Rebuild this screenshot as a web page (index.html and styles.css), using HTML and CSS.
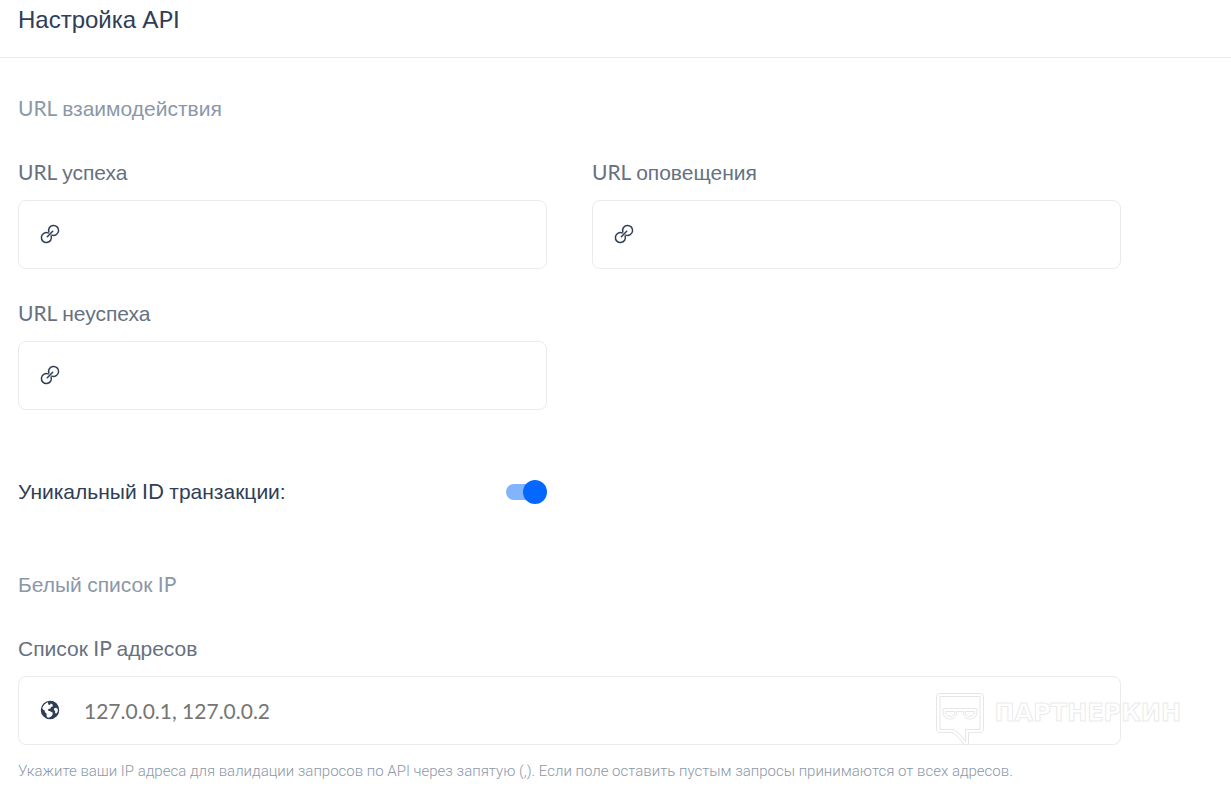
FILE: index.html
```html
<!DOCTYPE html>
<html lang="ru">
<head>
<meta charset="utf-8">
<meta name="viewport" content="width=device-width, initial-scale=1">
<title>Настройка API</title>
<link rel="stylesheet" href="styles.css">
</head>
<body>
<svg class="sprite" aria-hidden="true">
  <symbol id="link" viewBox="0 0 20 20">
    <g fill="none" stroke="currentColor" stroke-width="1.5" stroke-linecap="round">
      <path d="M8.900 8.100A5 5 0 1 1 11.900 11.100"/>
      <path d="M11.100 11.900A5 5 0 1 1 8.100 8.900"/>
      <path d="M7.300 12.700 12.700 7.300"/>
    </g>
  </symbol>
  <symbol id="globe" viewBox="0 0 20 20">
    <circle cx="10" cy="10" r="8.600" fill="#fff" stroke="currentColor" stroke-width="1.3"/>
    <path fill="currentColor" d="M9 1.1 13 1.2C17 2.8 19 6.4 18.8 10.2C18.5 14.8 14.5 18.9 9.8 18.8L9 17.4 11.2 16.4 12.6 14.6 12.8 12.8 10.7 11.4 8 10.4 8.3 9.1 10.6 8.4 10.9 7 13 6.2 12.5 4.4 10.7 3.4 9.9 4.9 8.3 4.4 7.9 2.8Z"/>
    <path fill="currentColor" d="M1.4 8.1 3.1 9.5 4.7 10.4 5 12.3 6.5 13.5 6.8 16.9 7.3 18.3C3.2 17.2.8 12.7 1.4 8.1Z"/>
    <path fill="#fff" d="M14.2 8.2 16 7.7 17.8 9.1 17.7 11.8 16 13.7 14.9 12.2 15.3 10.9 13.8 9.9Z"/>
  </symbol>
</svg>
<header class="page-header"><h1 class="page-title">Настройка<span class="latin"> API</span></h1></header>
<main class="content">
  <section class="section">
    <h2 class="section-title"><span class="latin">URL </span>взаимодействия</h2>
    <div class="url-grid">
      <div class="field">
        <label class="label" for="success"><span class="latin">URL </span>успеха</label>
        <div class="control"><svg class="icon" aria-hidden="true"><use href="#link"/></svg><input class="input" id="success" type="url"></div>
      </div>
      <div class="field">
        <label class="label" for="notify"><span class="latin">URL </span>оповещения</label>
        <div class="control"><svg class="icon" aria-hidden="true"><use href="#link"/></svg><input class="input" id="notify" type="url"></div>
      </div>
      <div class="field">
        <label class="label" for="fail"><span class="latin">URL </span>неуспеха</label>
        <div class="control"><svg class="icon" aria-hidden="true"><use href="#link"/></svg><input class="input" id="fail" type="url"></div>
      </div>
      <div class="switch-row">
        <label for="unique">Уникальный<span class="latin"> ID </span>транзакции:</label>
        <input class="switch" id="unique" type="checkbox" role="switch" checked>
      </div>
    </div>
  </section>
  <section class="section">
    <h2 class="section-title">Белый<span class="latin"> </span>список<span class="latin"> IP</span></h2>
    <div class="field">
      <label class="label" for="ips">Список<span class="latin"> IP </span>адресов</label>
      <div class="control"><svg class="icon" aria-hidden="true"><use href="#globe"/></svg><input class="input" id="ips" type="text" placeholder="127.0.0.1, 127.0.0.2" aria-describedby="ips-hint"></div>
    </div>
    <p class="hint" id="ips-hint">Укажите ваши IP адреса для валидации запросов по API через запятую (,). Если поле оставить пустым запросы принимаются от всех адресов.</p>
  </section>
</main>
<div class="watermark">
  <svg class="watermark-logo" viewBox="0 0 48 53" aria-hidden="true">
    <g fill="none" stroke="currentColor" stroke-width="1" stroke-linejoin="round">
      <path d="M4 .5H44Q47.500.5 47.500 4V35Q47.500 39.500 44 39.500H32.500V51.500H28Q22 43 17 39.500H4Q.5 39.500.5 35V4Q.5.5 4 .5Z"/>
      <path d="M4 3.500H44V36.500H29.500V48.500Q24 40 18 36.500H4Z"/>
      <path d="M8 15.500H40Q41 15.500 41 17V19C40.500 28 29 28 27.500 21V18.500H20.500V21C19 28 7.500 28 7 19V17Q7 15.500 8 15.500Z"/>
      <path d="M9.500 18.500H18.500V20C18 24.500 10 24.500 9.500 20ZM29.500 18.500H38.500V20C38 24.500 30 24.500 29.500 20Z"/>
    </g>
  </svg>
  <span class="watermark-text">ПАРТНЕРКИН</span>
</div>
</body>
</html>
```
FILE: styles.css
```css
* { box-sizing: border-box; }
body {
  margin: 0;
  background: #fff;
  color: #2f3e57;
  font-family: "Liberation Sans", Arial, sans-serif;
  font-size: 21px;
  line-height: 28px;
}
.latin { font-family: Lato, sans-serif; line-height: 1; }
.sprite { display: none; }
.page-header { padding: 4px 18px 21px; border-bottom: 1px solid #ebebeb; }
.page-title { margin: 0; font-size: 24px; line-height: 32px; font-weight: 400; }
.content { padding: 37px 110px 16px 18px; }
.section-title { margin: 0 0 36px; color: #8b98a8; font-size: 21px; line-height: 28px; font-weight: 400; }
.url-grid { display: grid; grid-template-columns: repeat(2, minmax(0, 1fr)); gap: 31px 45px; }
.label { display: block; margin-bottom: 13px; color: #66717f; }
.control {
  display: flex;
  align-items: center;
  gap: 24px;
  height: 69px;
  padding: 0 22px 1px 21px;
  border: 1px solid #ebebeb;
  border-radius: 8px;
}
.control:focus-within { border-color: #0468ff; }
.icon { flex: none; width: 20px; height: 20px; color: #2f3e57; }
.input { flex: 1; min-width: 0; height: 100%; padding: 0; border: 0; outline: 0; background: transparent; color: inherit; font: inherit; font-family: Lato, "Liberation Sans", sans-serif; }
.input::placeholder { color: #757575; opacity: 1; }
.switch-row { grid-column: 1; display: flex; align-items: center; justify-content: space-between; margin: 37px 0 65px; }
.switch {
  appearance: none;
  position: relative;
  width: 41px;
  height: 24px;
  margin: 0;
}
.switch::before { content: ""; position: absolute; top: 4px; left: 0; width: 36px; height: 16px; border-radius: 8px; background: #82b4fb; }
.switch::after { content: ""; position: absolute; top: 0; right: 0; width: 24px; height: 24px; border-radius: 50%; background: #0468ff; }
.switch:not(:checked) { transform: scaleX(-1); filter: grayscale(1); }
.hint { margin: 16px 0 0; color: #8b98a8; font-family: Roboto, sans-serif; font-size: 15px; line-height: 20px; font-weight: 300; }
.watermark { position: absolute; top: 693px; right: 50px; display: flex; align-items: flex-start; gap: 11px; color: #e6e6e6; pointer-events: none; }
.watermark-logo { width: 48px; height: 53px; }
.watermark-text { margin-top: 6px; color: #fff; font-family: "DejaVu Sans", sans-serif; font-size: 24px; font-weight: 700; -webkit-text-stroke: 1px #ebebeb; }
```
